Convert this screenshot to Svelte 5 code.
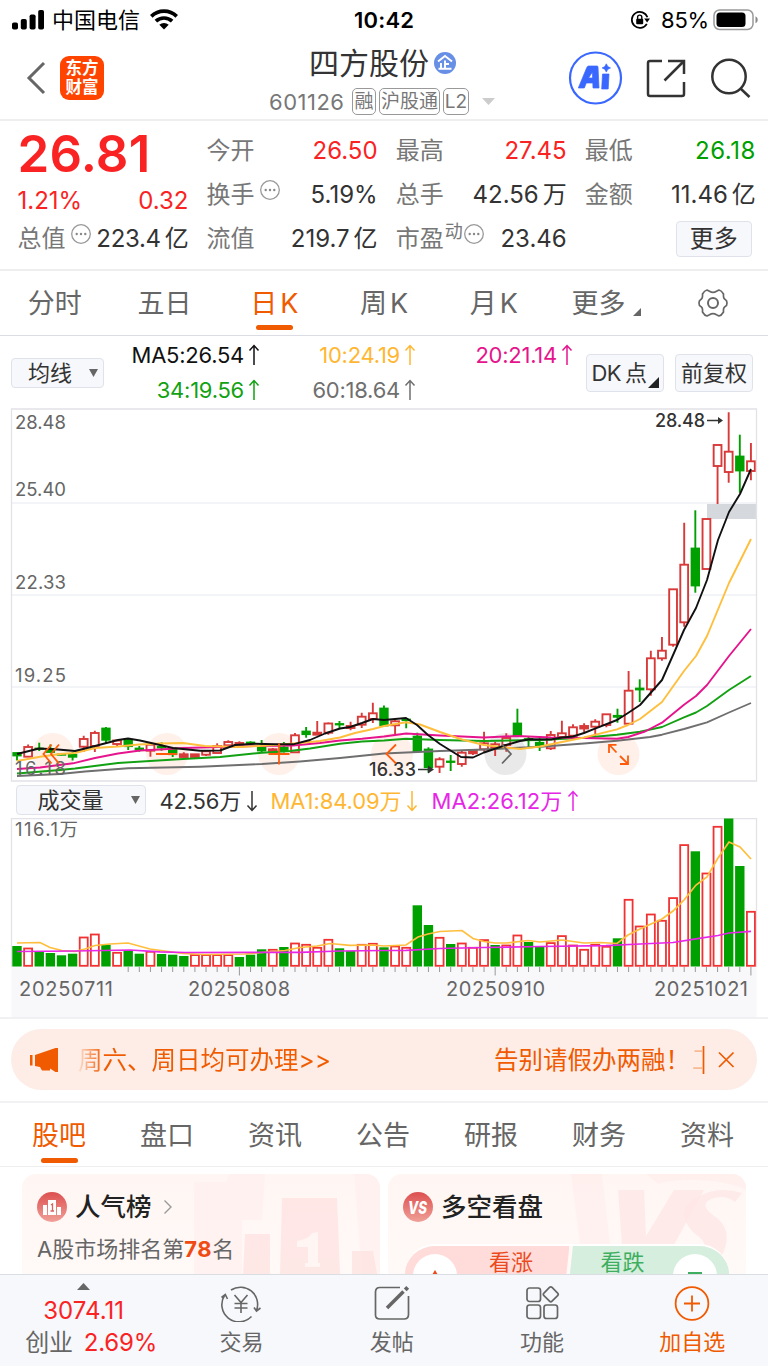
<script>
  const X0 = 17;
  const STEP = 11.12;
  // direction, high, body top, body bottom, low
  const candles = [
    ['d', 752.5, 752.5, 756, 760.5], ['u', 744.5, 747, 756.7, 756.7], ['d', 742.7, 748, 749.5, 751], ['d', 744.5, 748.5, 752.5, 752.5],
    ['d', 754, 754, 755.3, 755.3], ['d', 752, 754.3, 757.3, 760.5], ['u', 735.7, 739, 746.7, 752], ['u', 730.7, 733, 746, 752],
    ['d', 727, 728, 740.3, 743], ['u', 740.5, 740.5, 744, 746.7], ['d', 738.5, 739.3, 746.7, 750], ['d', 746, 748, 750, 751.7],
    ['u', 744.7, 744.7, 750.7, 756.7], ['d', 742.3, 746.3, 748, 750.7], ['d', 748, 748, 754.7, 757], ['u', 752.3, 754.3, 757, 757.5],
    ['u', 754, 754.3, 757, 758], ['u', 750.5, 751.3, 754.7, 756], ['u', 743.3, 746, 753, 753], ['u', 740.3, 742, 745.3, 745.3],
    ['u', 741.3, 743, 744.7, 744.7], ['d', 741.3, 742, 744, 744], ['d', 740, 746, 751, 752.3], ['u', 748, 749.3, 752, 752],
    ['d', 742, 747, 751, 752.5], ['u', 733, 735.3, 752.3, 752.3], ['d', 727, 731, 734.7, 737.7], ['u', 721, 732.7, 734.7, 734.7],
    ['u', 722.5, 723.5, 732.7, 734.7], ['d', 721, 723.5, 725, 729], ['u', 721.7, 726, 728, 730.3], ['u', 712.7, 716.7, 724.7, 728],
    ['u', 702.7, 713.3, 719, 723], ['d', 705.5, 708, 726, 726], ['u', 720, 721.3, 725.3, 735.3], ['d', 718, 719, 720.7, 728.3],
    ['d', 732.7, 736, 751.7, 751.7], ['d', 747.3, 749, 767.7, 772.7], ['u', 757.3, 759.3, 766.7, 773], ['d', 755, 761, 762.5, 771],
    ['u', 750.7, 752.7, 764, 766.7], ['u', 750, 751, 753.3, 755], ['u', 731.7, 743.3, 749.3, 751.7], ['u', 741.7, 744.3, 748, 756],
    ['u', 733.3, 738, 745, 751.7], ['d', 708.7, 723, 735.7, 736], ['d', 736, 738.5, 740, 747.3], ['d', 738.3, 742.3, 746.7, 751],
    ['u', 731, 735, 748.3, 750], ['u', 720.7, 733.3, 737, 738.3], ['u', 724.3, 727.3, 735.7, 737], ['u', 723.3, 726, 728.5, 733.3],
    ['u', 719.3, 721.7, 726.7, 736.7], ['u', 714, 714.3, 725, 727.3], ['d', 708.7, 715.3, 717.3, 722.7], ['u', 671, 690.7, 723.7, 723.7],
    ['d', 679.3, 688, 690, 702], ['u', 650.7, 658.3, 689.3, 695.7], ['u', 637, 650.7, 658.3, 660.7], ['u', 589.3, 589.3, 644.7, 646.7],
    ['u', 522.7, 564.7, 622.3, 626.7], ['d', 510.3, 548, 586, 592.7], ['u', 519, 519, 569, 569], ['u', 445, 445, 466, 504],
    ['u', 412.3, 451.7, 472, 482.7], ['d', 434.7, 456, 471, 492.7], ['u', 443, 461.3, 471, 480.3]
  ];
  const volTops = [
    946, 947.7, 952, 953, 955.3, 953.7, 936.7, 933.7, 944.7, 952, 951, 953.7, 951, 954, 954.7, 956, 954.3, 954.3, 954.3, 954.3,
    957, 954.7, 949.3, 949, 947, 942.7, 944, 947, 939, 948.3, 951, 944, 943, 947.3, 945.7, 947, 905.3, 925, 937, 944,
    942.7, 947, 939.3, 945, 944.7, 934.7, 942, 947, 942.3, 935.3, 944.7, 949, 944, 946, 938.3, 899, 925.7, 913.7, 920, 897.3,
    844.3, 851.3, 872.7, 826, 818.5, 866, 911
  ];
  const volDown = new Set([0, 2, 3, 4, 5, 8, 10, 11, 13, 14, 15, 20, 21, 22, 24, 29, 30, 33, 36, 37, 39, 43, 46, 47, 54, 61, 64, 65]);
  const lines = [
    ['#6f6f6f', '17,776 60,774 85,771.5 128,768.3 200,766.7 262,764 300,761.5 340,758 384,753.5 440,751 484,749.5 540,746.7 584,743.5 617,740.7 650,737 662,734.7 684,729 707,722.3 729,712.5 751,703'],
    ['#12a112', '17,773.5 60,770 75,768.5 118,763 150,761 183,759 220,757 262,752.7 290,751 310,748.5 340,743.7 362,741.5 384,740.5 406,738.8 440,740 484,741 540,740 584,737.8 617,734.8 640,731.7 662,727 684,717.3 696,712.5 707,706 729,690 751,676'],
    ['#e6148c', '17,769 40,767.5 73,763.3 95,758 118,753.5 140,750.5 160,749.5 183,748 220,747 260,746 293,745.5 320,743 340,740.5 362,738.8 384,736.5 406,733.5 440,735.5 484,737.5 517,736 551,737.5 584,738 617,738.7 628,737 645,731.5 662,722.7 684,704.7 696,696 707,685 729,656 751,629'],
    ['#ffbe3c', '17,761 40,756.7 60,754 75,753 95,748 118,746.5 139,744.5 160,743.5 183,743 205,746 240,747 275,745 300,743 320,741 340,737.5 355,733 373,729 384,726 406,722.3 420,724.5 440,732 462,739.5 484,745 506,747.5 520,749 540,746.5 562,742 584,737.5 617,729.3 628,725 640,719 662,702 684,671 696,656 707,636 729,583 740,561 751,539'],
    ['#111', '17,754 39,748.5 58,749.5 75,751 95,746 118,740 128,738.5 140,740.5 160,745 173,748 200,750.7 220,750.5 235,745 255,743.7 275,744.3 293,744.3 310,740 325,733.5 340,728.5 350,727 362,723 373,719 384,720 406,718 417,725 428,735 440,744 461,757 473,757.5 484,752.5 506,745 520,741 530,739.3 551,739.5 562,737.5 573,736.5 584,733 595,728.7 617,720 628,713 640,705 662,680 673.5,654 684,630 696,608 707,580 718,540 729,512 740,494 751,469']
  ];
  const volLines = [
    ['#ffbe3c', '17,943 40,942.5 50,947.5 62,950.5 75,951.5 85,949 95,945.5 110,944 128,943 150,949 183,953.5 205,954.5 245,954 262,952.5 285,950.5 300,947.5 317,946 330,943.5 350,945.3 373,945 384,946 406,945 418,937 428,934 440,931.5 462,930.5 473,938.5 484,941.5 495,943 506,943 528,940.5 540,942 551,941 562,940 584,943 600,942.5 617,943.5 628,935 640,929 651,924 662,919 673,911 684,900 696,885 707,877 718,858 729,842 740,847 751,859'],
    ['#e626e6', '17,951.5 75,951 130,950 160,951.8 185,952.5 300,952.3 340,951 384,950.5 406,950.3 440,948.5 484,947.5 540,946.5 606,945.7 640,944 673,942.5 696,938.8 718,935.5 729,933 751,931.3']
  ];
  const yLabels = [['28.48', 429], ['25.40', 496], ['22.33', 589], ['19.25', 682], ['16.18', 775]];
  const dates = [['20250711', 19, 94], ['20250808', 188, 102], ['20250910', 446, 99], ['20251021', 654, 94]];
  const periods = ['分时', '五日', '日K', '周K', '月K', '更多'];
  const sections = ['股吧', '盘口', '资讯', '公告', '研报', '财务', '资料'];
  const averages = [
    ['MA5:26.54', '#111'], ['10:24.19', '#ffb733'], ['20:21.14', '#e6148c'],
    ['34:19.56', '#12a112'], ['60:18.64', '#6f6f6f']
  ];
  const cx = (i) => X0 + i * STEP;
</script>

{#snippet dots()}
  <svg class="dots" width="22" height="22" viewBox="0 0 22 22"><circle cx="11" cy="11" r="9.3" fill="none" stroke="#999" stroke-width="1.3" /><g fill="#888"><circle cx="6.7" cy="11" r="1.2" /><circle cx="11" cy="11" r="1.2" /><circle cx="15.3" cy="11" r="1.2" /></g></svg>
{/snippet}
{#snippet arrow(down)}
  <svg class="arrow" width="12" height="22" viewBox="0 0 12 22" style:transform={down ? 'rotate(180deg)' : null}><path d="M6 21V1.5M1.5 6.5L6 1.5l4.500 5" fill="none" stroke="currentColor" stroke-width="1.5" /></svg>
{/snippet}

<main>
  <div class="status">
    <svg width="32" height="20" viewBox="0 0 32 20"><rect x="0" y="12.500" width="6" height="7" rx="1.800" /><rect x="8.800" y="9" width="6" height="10.500" rx="1.800" /><rect x="17.600" y="4.500" width="6" height="15" rx="1.800" /><rect x="26.200" y="0" width="5.800" height="19.500" rx="1.800" /></svg>
    <span class="carrier">中国电信</span>
    <svg class="wifi" width="28" height="21" viewBox="0 0 28 21"><g fill="none" stroke="#000" stroke-width="3.700"><path d="M1.300 7.300a18.300 18.300 0 0 1 25.400 0" /><path d="M5.900 12.200a11.800 11.800 0 0 1 16.200 0" /></g><path d="M9.300 15.700a7 7 0 0 1 9.400 0L14 20.400z" /></svg>
    <span class="clock">10:42</span>
    <svg class="lock" width="20" height="20" viewBox="0 0 20 20"><g fill="none" stroke="#000" stroke-width="1.700"><path d="M16.800 13.800a8 8 0 1 1 .6-6.500" /><path d="M7.600 9V7.200a2.100 2.100 0 0 1 4.200 0V9" stroke-width="1.400" /></g><rect x="6.200" y="8.700" width="7" height="5.600" rx="1" /><path d="M14.200 8.600h5.800l-2.900 4z" /></svg>
    <span class="pct">85%</span>
    <svg width="46" height="22" viewBox="0 0 46 22"><rect x="1" y="1" width="39" height="19.500" rx="5.500" fill="none" stroke="#999" stroke-width="1.500" /><rect x="3.500" y="3.500" width="29" height="14.500" rx="3.500" /><path d="M42.500 7.300v7q2.300-1 2.300-3.500t-2.300-3.500z" fill="#888" /></svg>
  </div>

  <header>
    <svg class="back" width="20" height="34" viewBox="0 0 20 34"><path d="M18 2L3 17l15 15" fill="none" stroke="#666" stroke-width="3" /></svg>
    <div class="logo"><span>东方</span><span>财富</span></div>
    <div class="title">
      <div class="name"><span>四方股份</span>
        <svg width="24" height="24" viewBox="0 0 24 24"><circle cx="12" cy="12" r="11" fill="#668fe5" /><path d="M5 10.500L12 5l7 5.500M12 9.500v8M8 12v5.500M12 13h4M5.500 17.800h13" fill="none" stroke="#fff" stroke-width="1.900" /></svg>
      </div>
      <div class="code"><span>601126</span><b style:width="24px">融</b><b style:width="61px">沪股通</b><b style:width="26px">L2</b>
        <svg width="14" height="8" viewBox="0 0 14 8"><path d="M0 0h13L6.500 7z" fill="#ccc" /></svg>
      </div>
    </div>
    <svg class="tools" width="184" height="56" viewBox="0 0 184 56">
      <circle cx="27.500" cy="28" r="25.500" fill="none" stroke="#3a68ff" stroke-width="2.200" />
      <path d="M20.500 16h8.500q1 0 1 1l1 21h-6l-.2-5h-6.500l-2 5h-6l8.500-20.500q.6-1.500 1.700-1.500zM20.600 28h4l-.2-6zM34.500 24h6.500l-.8 15h-6.500zM38.300 13.800l1.500 2.800 2.700 1.300-2.700 1.400-1.500 2.800-1.500-2.800-2.700-1.400 2.700-1.300z" fill="#3a68ff" fill-rule="evenodd" stroke="#3a68ff" stroke-width=".7" stroke-linejoin="round" />
      <g fill="none" stroke="#333" stroke-width="2.500"><path d="M94 11H82q-2 0-2 2v31q0 2 2 2h32q2 0 2-2V32M100 11h16v13M116 11L96.500 30.500" /><circle cx="161" cy="26.500" r="16.700" /><path d="M172.500 38.500l9 8.500" /></g>
    </svg>
  </header>

  <section class="quote">
    <div class="col">
      <div class="price">26.81</div>
      <div class="row red lower"><span>1.21%</span><span>0.32</span></div>
      <div class="row last"><span class="lab">总值{@render dots()}</span><span>223.4<i>亿</i></span></div>
    </div>
    <div class="col">
      <div class="row"><span class="lab">今开</span><span class="red">26.50</span></div>
      <div class="row"><span class="lab">换手{@render dots()}</span><span>5.19%</span></div>
      <div class="row"><span class="lab">流值</span><span>219.7<i>亿</i></span></div>
    </div>
    <div class="col">
      <div class="row"><span class="lab">最高</span><span class="red">27.45</span></div>
      <div class="row"><span class="lab">总手</span><span>42.56<i>万</i></span></div>
      <div class="row"><span class="lab pe">市盈<sup>动</sup>{@render dots()}</span><span>23.46</span></div>
    </div>
    <div class="col">
      <div class="row"><span class="lab">最低</span><span class="green wide">26.18</span></div>
      <div class="row"><span class="lab">金额</span><span>11.46<i>亿</i></span></div>
      <div class="row more"><button>更多</button></div>
    </div>
  </section>

  <nav class="periods">
    {#each periods as p, i}
      <div class="tab" class:on={i === 2} class:drop={i === 5}>
        {#if p.endsWith('K')}<span>{p[0]}</span><span class="k">K</span>{:else}<span>{p}</span>{/if}
        {#if i === 5}<svg width="8" height="8" viewBox="0 0 8 8"><path d="M8 0v8H0z" fill="#666" /></svg>{/if}
      </div>
    {/each}
    <div class="tab gear"><svg width="32" height="32" viewBox="-16 -16 32 32"><g fill="none" stroke="#666" stroke-width="1.700" stroke-linejoin="round"><path d="M-3.500-11.700Q0-9.500 3.500-11.700L6-13q2.500.5 4.500 4Q10-4.500 12.500-3.300 14 -2.500 14 0T12.500 3.300Q10 4.500 10.500 9 8.500 12.500 6 13L3.500 11.700Q0 9.500-3.500 11.700L-6 13q-2.500-.5-4.500-4Q-10 4.500-12.500 3.300-14 2.500-14 0T-12.500-3.300Q-10-4.500-10.500-9-8.500-12.500-6-13z" /><circle r="5" stroke-width="2" /></g></svg></div>
  </nav>

  <section class="ma">
    <button class="pick avg">均线<svg width="9" height="8" viewBox="0 0 9 8"><path d="M0 0h9L4.500 8z" fill="#666" /></svg></button>
    <div class="legend">
      {#each averages as [t, c]}<span style:color={c}>{t}{@render arrow(false)}</span>{/each}
    </div>
    <button class="opt dk">DK<span>点</span><svg width="11" height="11" viewBox="0 0 11 11"><path d="M11 0v11H0z" fill="#222" /></svg></button>
    <button class="opt">前复权</button>
  </section>

  <svg class="chart" width="768" height="374" viewBox="0 408 768 374">
    <path d="M12 503H756M12 595H756M12 687H756" stroke="#eff1f5" stroke-width="1.500" />
    <rect x="707" y="504" width="49" height="15" fill="#d5d8dd" />
    <g fill="#fff0ea"><circle cx="53" cy="754" r="21" /><circle cx="167" cy="754" r="21" /><circle cx="279" cy="754" r="21" /><circle cx="392" cy="754" r="21" /><circle cx="618.500" cy="754" r="21" /></g>
    <circle cx="505.500" cy="754" r="21" fill="#e9e9ea" />
    {#each candles as [d, h, t, b, l], i}
      {#if d === 'u'}
        <path d="M{cx(i)} {h}V{t}M{cx(i)} {b}V{l}" stroke="#d83a3a" stroke-width="1.900" />
        <rect x={cx(i) - 3.9} y={t} width="7.8" height={b - t} fill={b - t < 2.800 ? '#d83a3a' : '#fff'} stroke="#d83a3a" stroke-width="1.900" />
      {:else}
        <path d="M{cx(i)} {h}V{l}" stroke="#00a000" stroke-width="1.900" />
        <rect x={cx(i) - 4.7} y={t - 0.4} width="9.4" height={b - t + 0.8} fill="#00a000" />
      {/if}
    {/each}
    {#each lines as [c, p]}<polyline points={p} fill="none" stroke={c} stroke-width="1.900" stroke-linejoin="round" />{/each}
    <path d="M11.500 781V409H756.500V781z" fill="none" stroke="#e2e2e8" stroke-width="1.300" />
    <g class="axis">{#each yLabels as [t, y]}<text x="15" {y} textLength="51">{t}</text>{/each}</g>
    <g class="mark"><text x="655" y="427" textLength="50">28.48</text><text x="369" y="776" textLength="47">16.33</text></g>
    <path d="M707 420.500h13M418 769.500h12" stroke="#333" stroke-width="1.300" /><path d="M718 417l5 3.500-5 3.500zM428 765.500l6 4-6 4z" fill="#333" />
    <g fill="none" stroke="#ff5a0a" stroke-width="1.800"><path d="M51.500 744.500l-8 9.500 8 9.500M59 744.500l-8 9.500 8 9.500M156 754h21M268.500 754h21M279 743.500v21M396 744.500l-9.500 9.500 9.500 9.500" /><path d="M616.500 752.500l-7-7.500M609 753V744.800h7.500M620 756l7.500 7.500M628 755.500v8.500h-8" /></g>
    <path d="M502 744.500l9 9.500-9 9.500" fill="none" stroke="#666" stroke-width="1.700" />
  </svg>

  <div class="volhead">
    <button class="pick vol">成交量<svg width="9" height="8" viewBox="0 0 9 8"><path d="M0 0h9L4.500 8z" fill="#666" /></svg></button>
    <span class="v0">42.56万{@render arrow(true)}</span><span class="v1">MA1:84.09万{@render arrow(true)}</span><span class="v2">MA2:26.12万{@render arrow(false)}</span>
  </div>

  <svg class="chart" width="768" height="201" viewBox="0 818 768 201">
    <rect x="11.500" y="966.500" width="745" height="51" fill="#f8f8fb" />
    <path d="M11.500 967V818.700H756.500V967" fill="none" stroke="#e2e2e8" stroke-width="1.300" />
    {#each volTops as t, i}
      {#if volDown.has(i)}
        <rect x={cx(i) - 4.7} y={t} width="9.4" height={966.5 - t} fill="#00a000" />
      {:else}
        <rect x={cx(i) - 4} y={t + 0.8} width="8" height={965 - t} fill="#fff" stroke="#f03232" stroke-width="1.800" />
      {/if}
      {#if i >= 10}<path d="M{cx(i)} 967v{i === 20 || i === 43 || i === 66 ? 8.5 : 5}" stroke="#999" />{/if}
    {/each}
    {#each volLines as [c, p]}<polyline points={p} fill="none" stroke={c} stroke-width="1.700" />{/each}
    <text class="axis" x="15" y="836" textLength="63">116.1万</text>
    {#each dates as [t, x, w]}<text class="date" {x} y="995.500" textLength={w}>{t}</text>{/each}
    <path d="M0 1018H768" stroke="#ececf0" stroke-width="1.500" />
  </svg>

  <div class="notice">
    <svg width="30" height="26" viewBox="0 0 30 26" fill="#f05a00"><path d="M1 8h2.500v10.500H1zM6 8L26.500 1h2.500v24h-2.500L21 21.500v2h-8l-2-3.500-5-1z" /></svg>
    <span class="n1">周六、周日均可办理&gt;&gt;</span>
    <span class="n2">告别请假办两融！</span>
    <span class="n3">工</span>
    <svg width="34" height="28" viewBox="0 0 34 28"><path d="M1.500 0v28M17 6.500l14.500 14.500M31.500 6.500L17 21" stroke="#f05a00" stroke-width="1.700" /></svg>
  </div>

  <nav class="sections">
    {#each sections as s, i}<div class="tab" class:on={i === 0}><span>{s}</span></div>{/each}
  </nav>

  <div class="cards">
    <article>
      <svg class="bg" width="358" height="100" viewBox="0 0 358 100"><path d="M172 8h32l3-8h36l-3 46h-20v54h-48zM332 0h26v100h-18z" fill="#ffedeb" opacity=".55" /><path d="M260 24h55l3 76h-60zM223 60h25v40h-27zM330 77h21l4 23h-25z" fill="#fde2e0" opacity=".75" /><path d="M296 58v31h2v4h-15v-4h3V73h-11v-6q12-2 15-8z" fill="#fff5f3" /></svg>
      <h3><svg width="30" height="30" viewBox="0 0 30 30"><defs><linearGradient id="badge" x2="0" y2="1"><stop stop-color="#dc5050" /><stop offset="1" stop-color="#f0a098" /></linearGradient></defs><circle cx="15" cy="15" r="15" fill="url(#badge)" /><path d="M6 13h4v10H6zM11 8h8v15h-8zM20 15h4v8h-4z" fill="#fff" /><path d="M14 13l1.500-1v7M13.500 19h3.500" fill="none" stroke="#dc6060" stroke-width="1.300" /></svg>人气榜<svg class="chev" width="10" height="16" viewBox="0 0 10 16"><path d="M1.500 1.500L8 8l-6.500 6.500" fill="none" stroke="#999" stroke-width="1.400" /></svg></h3>
      <p>A股市场排名第<em>78</em>名</p>
    </article>
    <article>
      <svg class="bg" width="358" height="100" viewBox="0 0 358 100"><path d="M183 0h31l8 70h-30zM258 0h100v16q-20-10-55-10-20 0-33 4z" fill="#ffedeb" opacity=".6" /><path d="M230 16h26l2 46 28-46h30l-46 84h-34z" fill="#fde6e4" opacity=".7" /><path d="M347 28q-10-8-24-3-12 6 2 16 20 13 11 36-8 20-40 20l-8-18q25 4 28-6 2-6-10-14-20-20 0-34 22-14 48-6z" fill="#fde6e4" opacity=".7" /></svg>
      <h3><svg width="30" height="30" viewBox="0 0 30 30"><circle cx="15" cy="15" r="15" fill="url(#badge)" /><text class="vs" x="5" y="21.500" textLength="19" lengthAdjust="spacingAndGlyphs">VS</text></svg>多空看盘</h3>
      <div class="vote"><div class="bull"><u><svg width="12" height="10" viewBox="0 0 12 10"><path d="M6 0l6 10H0z" fill="#eb4a1c" /></svg></u><span>看涨</span></div><div class="bear"><span>看跌</span><u><svg width="14" height="8" viewBox="0 0 14 8"><path d="M0 0h14v8H0z" fill="#3fae60" /></svg></u></div></div>
    </article>
  </div>

  <footer>
    <div class="index"><svg width="13" height="7" viewBox="0 0 13 7"><path d="M6.500 0L13 7H0z" fill="#666" /></svg><span class="red">3074.11</span><div>创业<span class="red">2.69%</span></div></div>
    <div class="item"><svg width="42" height="38" viewBox="0 0 42 38"><g fill="none" stroke="#666" stroke-width="1.600"><path d="M11 6A17.200 17.200 0 0 1 36.500 26.500M31.500 32.500A17.200 17.200 0 0 1 4.800 11M1.500 13.500l3.800-3L7.500 15M34 23.500l2.500 3.500 4-3M14.500 11l6.500 7.500L27.500 11M21 18.500V29M14.500 19.500h13M14.500 24h13" /></g></svg><span>交易</span></div>
    <div class="item"><svg width="40" height="38" viewBox="0 0 40 38"><g fill="none" stroke="#666" stroke-width="1.700"><path d="M28 3.500H8Q3.500 3.500 3.500 8v23Q3.500 35 8 35h24q4.500 0 4.500-4.500V12" /><path d="M15 24L31.500 7.500" stroke-width="3.600" /><path d="M33.200 5.800l2.500-2.500" stroke-width="4" /></g></svg><span>发帖</span></div>
    <div class="item"><svg width="36" height="38" viewBox="0 0 36 38"><g fill="none" stroke="#666" stroke-width="1.700"><rect x="3" y="4" width="13.500" height="13.500" rx="2.500" /><rect x="3" y="21" width="13.500" height="13.500" rx="2.500" /><rect x="20" y="21" width="13.500" height="13.500" rx="2.500" /><rect x="21" y="4.500" width="11.500" height="11.500" rx="1.800" transform="rotate(45 26.700 10.300)" /></g></svg><span>功能</span></div>
    <div class="item on"><svg width="38" height="38" viewBox="0 0 38 38"><g fill="none" stroke="#f05a00" stroke-width="1.800"><circle cx="19" cy="19.500" r="16.400" /><path d="M19 11.500v16M11 19.500h16" /></g></svg><span>加自选</span></div>
  </footer>
</main>

<style>
  :global(body) { margin: 0; background: #fff; overflow: hidden; }
  main { width: 768px; height: 1366px; overflow: hidden; display: flex; flex-direction: column; font-family: Inter, "Noto Sans CJK SC", sans-serif; color: #333; line-height: 1; white-space: nowrap; font-weight: 400; }
  main > * { flex: none; box-sizing: border-box; }
  svg { display: block; flex: none; }
  button { font: inherit; color: inherit; padding: 0; border: 1px solid #dfe2ea; background: #f7f8fb; border-radius: 4px; box-sizing: border-box; display: flex; align-items: center; justify-content: center; line-height: 1; }
  .red { color: #fa2323; }
  .green { color: #00a000; }

  .status { height: 38px; display: flex; align-items: center; padding: 1px 0 0 12px; color: #000; font-size: 22px; }
  .carrier { width: 90px; margin-left: 8px; }
  .wifi { margin-left: 8px; }
  .clock { width: 62px; margin-left: 176px; font-weight: 600; letter-spacing: .2px; }
  .lock { margin-left: 214px; }
  .pct { width: 52px; margin-left: 11px; letter-spacing: -.2px; }

  header { height: 83px; border-bottom: 2px solid #eee; display: flex; align-items: center; }
  .back { margin: -2px 0 0 26px; }
  .logo { width: 44px; height: 44px; margin: -2px 0 0 14px; border-radius: 9px; background: #ff4400; color: #fff; font-size: 16.500px; font-weight: 700; display: flex; flex-direction: column; align-items: center; justify-content: center; gap: 2px; }
  .title { width: 300px; height: 81px; margin-left: 165px; display: flex; flex-direction: column; }
  .name { height: 49px; padding-left: 40px; display: flex; align-items: center; font-size: 30px; gap: 4px; }
  .code { display: flex; align-items: center; height: 29px; font-size: 22px; color: #777; }
  .code span { width: 78px; letter-spacing: .5px; margin-right: 5px; }
  .code b { height: 27px; box-sizing: border-box; border: 1.500px solid #999; border-radius: 5px; margin-right: 3px; font-size: 19px; font-weight: 400; display: flex; align-items: center; justify-content: center; }
  .code svg { margin-left: 10px; }
  .tools { margin: -2px 0 0 -1px; }

  .quote { height: 150px; border-bottom: 2px solid #eee; padding: 8px 0 0 17.500px; display: grid; grid-template-columns: repeat(4, 171px); column-gap: 18.100px; font-size: 24px; align-items: start; }
  .row { height: 44px; display: flex; align-items: center; justify-content: space-between; }
  .row i { font-style: normal; margin-left: 4px; }
  .wide { letter-spacing: .5px; }
  .lab { color: #777; display: flex; align-items: center; }
  .lab .dots { margin: -10px 0 0 4px; }
  .lab sup { font-size: 18px; align-self: flex-start; line-height: 1; margin: -4px 0 0 1px; }
  .lab.pe .dots { margin-left: 0; }
  .price { font-size: 51px; font-weight: 600; color: #fa2323; height: 49px; line-height: 49px; letter-spacing: .2px; }
  .row.lower { height: 46px; }
  .row.last { height: 32px; margin-top: -1px; }
  .row.last > span:last-child { letter-spacing: -.3px; }
  .more { justify-content: flex-end; }
  .more button { width: 76px; height: 36px; margin: -1px 4px 0 0; }

  .periods { height: 65px; border-bottom: 1.500px solid #dcdce4; display: grid; grid-template-columns: repeat(7, 1fr); }
  .tab { position: relative; display: flex; align-items: center; justify-content: center; font-size: 27px; color: #666; }
  .tab .k { margin-left: 3px; }
  .tab svg { margin: 18px -16px 0 8px; }
  .tab.drop { padding-right: 10px; }
  .tab.gear svg { margin: 0; }
  .tab.on { color: #f05a00; }
  .tab.on::after { content: ""; position: absolute; bottom: 5px; width: 37px; height: 5px; border-radius: 3px; background: #f05a00; }

  .ma { height: 72px; display: flex; padding-left: 11px; font-size: 22px; }
  .pick { justify-content: space-between; }
  .avg { width: 93px; height: 30px; margin-top: 22px; padding: 0 5px 0 16px; }
  .legend { width: 472px; height: 70px; margin-top: 1px; display: grid; grid-template-columns: 156px 156px 157px; grid-template-rows: 35px 35px; }
  .legend span { display: flex; align-items: center; justify-content: flex-end; letter-spacing: -.25px; }
  .arrow { margin-left: 4px; }
  .opt { width: 78px; height: 38px; margin: 17.500px 0 0 10px; font-size: 22px; position: relative; }
  .opt:last-child { margin-left: 11px; }
  .dk { letter-spacing: -.5px; }
  .opt span { margin: 0 12px 0 4px; }
  .opt svg { position: absolute; right: 4px; bottom: 3px; }

  .axis { font-size: 18.500px; fill: #666; }
  .date { font-size: 20px; fill: #666; }
  .mark { font-size: 18px; fill: #333; font-weight: 500; }

  .volhead { height: 36px; padding: 1px 0 0 15.500px; display: flex; align-items: center; font-size: 22px; }
  .vol { width: 130px; height: 30px; padding: 0 5px 0 21px; margin-top: -1px; }
  .volhead span { display: flex; align-items: center; }
  .v0 { margin-left: 14px; width: 111px; letter-spacing: -.2px; }
  .v1 { width: 161px; color: #ffb733; letter-spacing: -.1px; }
  .v2 { color: #e626e6; letter-spacing: .1px; }
  .volhead .arrow { margin-left: 5px; }

  .notice { margin: 10px 11px 0; width: 746px; height: 61px; border-radius: 31px; background: #fdede6; color: #f05a00; display: flex; align-items: center; padding: 1px 0 0 18px; font-size: 24.500px; }
  .n1 { width: 416px; margin-left: 19px; background: linear-gradient(90deg, #fde0d0 0, #f05a00 26px); background-clip: text; color: transparent; line-height: 32px; }
  .n2 { width: 198px; }
  .n3 { width: 10px; height: 30px; line-height: 30px; overflow: hidden; opacity: .35; }

  .sections { margin-top: 11px; height: 66px; padding: 2px 7px 0 5px; border-top: 2px solid #f2f2f5; border-bottom: 1.500px solid #eee; display: grid; grid-template-columns: repeat(7, 108px); }
  .sections .tab.on::after { bottom: 3px; }

  .cards { height: 107px; padding: 7px 0 0 22px; display: flex; gap: 8px; overflow: hidden; }
  article { width: 358px; height: 120px; border-radius: 14px; background: linear-gradient(#fff6f3, #fffaf8); position: relative; overflow: hidden; box-sizing: border-box; padding: 16px 15px; }
  .bg { position: absolute; left: 0; top: 0; }
  h3 { position: relative; margin: 2px 0 0; height: 30px; display: flex; align-items: center; font-size: 25.500px; font-weight: 500; color: #222; }
  h3 svg:first-child { margin-right: 8px; }
  .chev { margin-left: 11px; }
  .vs { font-size: 18px; font-weight: 800; font-style: italic; fill: #fff; }
  p { position: relative; margin: 16px 0 0; font-size: 22px; color: #666; }
  em { font-style: normal; font-weight: 700; color: #f04a14; letter-spacing: .6px; }
  .vote { position: relative; margin: 22px 0 0 2px; width: 324px; height: 60px; display: flex; font-size: 22px; border-radius: 30px 30px 0 0; overflow: hidden; border-top: 2px solid #fff; }
  .bull, .bear { width: 165px; display: flex; padding: 8px 0 0 8px; box-sizing: border-box; }
  .bull { background: #ffdcda; color: #eb4a1c; clip-path: polygon(0 0, 100% 0, 96% 60px, 0 60px); }
  .bear { width: 163px; background: #d5eedd; color: #3fae60; margin-left: -3px; padding: 8px 8px 0 34px; clip-path: polygon(4% 0, 100% 0, 100% 100%, 0 60px); }
  .vote u { width: 44px; height: 44px; border-radius: 50%; background: #fff; display: flex; justify-content: center; text-decoration: none; padding-top: 16px; box-sizing: border-box; }
  .bear u { padding-top: 18px; }
  .vote span { margin-top: -3px; }
  .bull span { margin-left: 32px; }
  .bear span { width: 73px; }

  footer { height: 92px; border-top: 1.500px solid #dadde2; background: #f7f8fb; display: grid; grid-template-columns: repeat(5, 150.300px); padding-left: 16px; color: #666; font-size: 22px; }
  .index { display: flex; flex-direction: column; align-items: center; font-size: 24px; padding-top: 8px; }
  .index > svg, .index > span { margin-right: 15px; }
  .index > span { margin-top: 9px; font-size: 24px; }
  .index div { margin-top: 8px; display: flex; gap: 11px; letter-spacing: -.2px; }
  .item { display: flex; flex-direction: column; align-items: center; padding-top: 9px; }
  .item span { margin-top: 9px; }
  .item.on { color: #f05a00; }
</style>
